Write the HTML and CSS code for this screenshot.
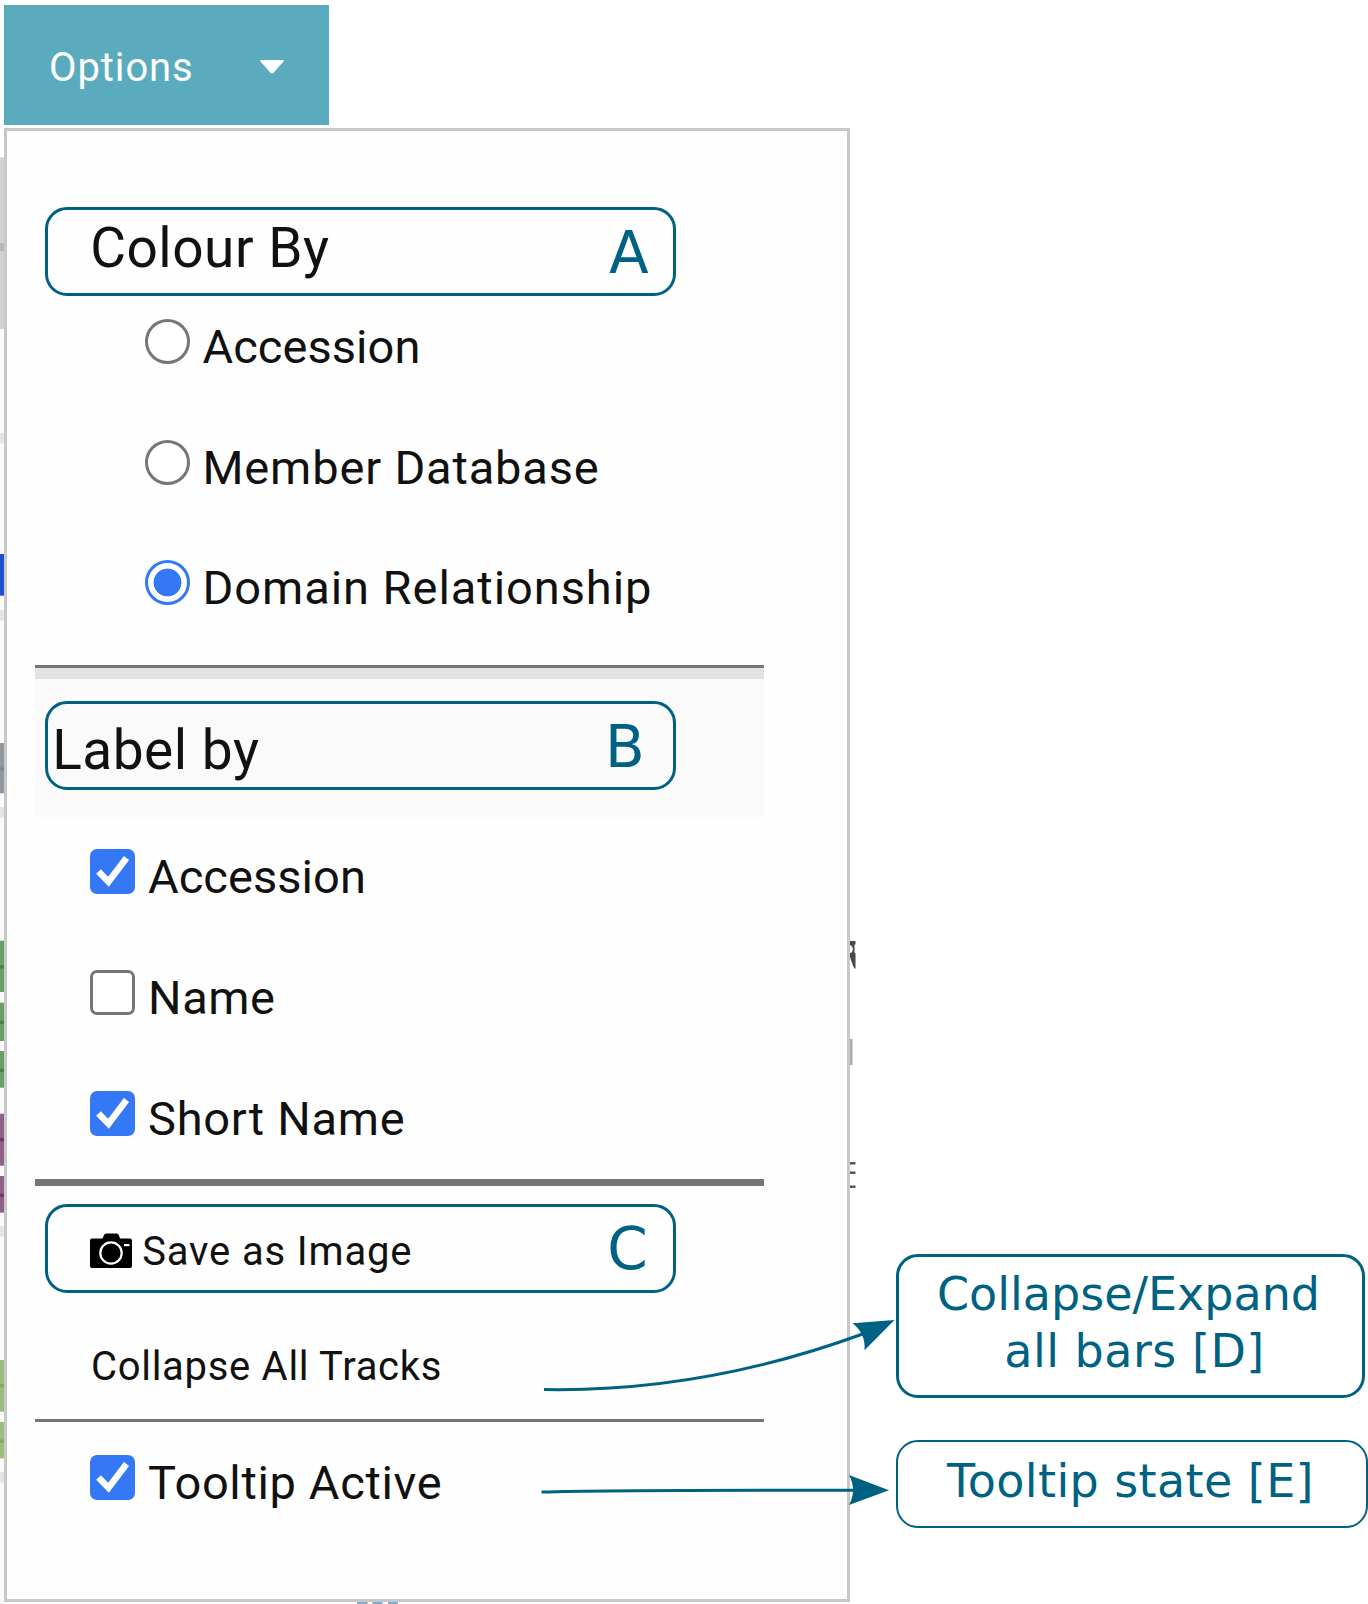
FILE: index.html
```html
<!DOCTYPE html>
<html lang="en">
<head>
<meta charset="utf-8">
<title>Options menu</title>
<link rel="stylesheet" href="styles.css">
</head>
<body>
<main class="page">
  <svg class="tracks" width="1368" height="1604" viewBox="0 0 1368 1604" aria-hidden="true">
    <rect x="0" y="329" width="4" height="1275" fill="#fafafa"/>
    <rect x="0" y="157.5" width="4" height="171.5" fill="#d1d1d1"/><rect x="0" y="243" width="4" height="8" fill="#b7b7b7"/>
    <g fill="#e4e4e4">
      <rect x="0" y="433" width="4" height="10.5"/><rect x="0" y="610" width="4" height="10.5"/>
      <rect x="0" y="807" width="4" height="10.5"/><rect x="0" y="1226" width="4" height="10.5"/>
      <rect x="0" y="1472" width="4" height="10.5"/>
    </g>
    <rect x="0" y="554" width="4" height="41.7" fill="#1f50d2"/>
    <rect x="0" y="743" width="4" height="50.3" fill="#8f999f"/><rect x="0" y="767.5" width="4" height="3" fill="#7d878d"/>
    <g fill="#6a9f67">
      <rect x="0" y="940.7" width="4" height="51.3"/><rect x="0" y="1002.7" width="4" height="38.3"/><rect x="0" y="1051" width="4" height="36.7"/>
    </g>
    <g fill="#4a8246">
      <rect x="0" y="965" width="4" height="3.5"/><rect x="0" y="1020.5" width="4" height="3.5"/><rect x="0" y="1068.5" width="4" height="3.5"/>
    </g>
    <g fill="#8f6187"><rect x="0" y="1113.7" width="4" height="52"/><rect x="0" y="1176" width="4" height="36.7"/></g>
    <g fill="#713d68"><rect x="0" y="1138" width="4" height="3.5"/><rect x="0" y="1193.5" width="4" height="3.5"/></g>
    <g fill="#9bbd7e"><rect x="0" y="1360" width="4" height="51.7"/><rect x="0" y="1422" width="4" height="36.3"/></g>
    <g fill="#7fae5c"><rect x="0" y="1384" width="4" height="3.5"/><rect x="0" y="1439.5" width="4" height="3.5"/></g>
    <path d="M850 941h5.500v3.500l-1 0v8l1 1v15.500q-2-1-3.500-6l-2-6v-4c3.500 0 4-7 0-8z" fill="#484848"/>
    <rect x="850" y="1039" width="2.5" height="26" fill="#aaa"/>
    <path d="M850 1162h5.500v2.500h-5.500zM850 1171.500h5.500v2.500h-5.500zM850 1185.500h5.500v2.500h-5.500z" fill="#555"/>
    <path d="M357 1602h10.500v2h-10.500zM372.500 1602h10v2h-10zM388 1602h10v2h-10z" fill="#7cacd0"/>
  </svg>

  <div class="menu">
    <button class="toggle" type="button">
      <span>Options</span>
      <svg width="26" height="16" viewBox="0 0 26 16"><path d="M2 1h22q1.500 0 .500 1.500L14.500 13.700q-1.500 1.500-3 0L1.500 2.500Q.500 1 2 1z" fill="#fff"/></svg>
    </button>

    <div class="panel">
      <section class="colour">
        <h2 class="frame frame-a"><span>Colour By</span><b class="key">A</b></h2>
        <div class="radios">
          <label class="option"><i class="radio"></i><span class="t-acc">Accession</span></label>
          <label class="option"><i class="radio"></i><span class="t-member">Member Database</span></label>
          <label class="option"><i class="radio on"></i><span class="t-domain">Domain Relationship</span></label>
        </div>
      </section>

      <section class="label-by">
        <h2 class="frame frame-b"><span>Label by</span><b class="key">B</b></h2>
      </section>
      <div class="checks">
        <label class="option"><i class="check on"><svg viewBox="0 0 45 45"><path d="M8.500 22.500l10 10.200L36.500 9" /></svg></i><span class="t-acc">Accession</span></label>
        <label class="option"><i class="check"></i><span class="t-name">Name</span></label>
        <label class="option"><i class="check on"><svg viewBox="0 0 45 45"><path d="M8.500 22.500l10 10.200L36.500 9" /></svg></i><span class="t-short">Short Name</span></label>
      </div>

      <section class="actions">
        <div class="frame frame-c">
          <svg class="camera" width="42" height="35" viewBox="0 0 42 35">
            <path d="M2 5.500h10.500L14 2q.7-1.500 2.200-1.500h10.500q1.500 0 2.100 1.500l1.200 3.500h10q2 0 2 2V33q0 2-2 2H2q-2 0-2-2V7.500q0-2 2-2z" fill="#000"/>
            <circle cx="21" cy="20" r="10.700" fill="none" stroke="#fff" stroke-width="2.200"/>
            <rect x="34" y="11" width="5.500" height="2.200" fill="#fff"/>
          </svg>
          <span class="t-save">Save as Image</span><b class="key">C</b>
        </div>
        <div class="collapse">Collapse All Tracks</div>
      </section>

      <section class="tooltip-row">
        <label class="option"><i class="check on"><svg viewBox="0 0 45 45"><path d="M8.500 22.500l10 10.200L36.500 9" /></svg></i><span class="t-tip">Tooltip Active</span></label>
      </section>
    </div>
  </div>

  <aside class="callouts">
    <div class="callout callout-d"><span>Collapse/Expand</span><span class="second">all bars [D]</span></div>
    <div class="callout callout-e"><span>Tooltip state [E]</span></div>
  </aside>

  <svg class="arrows" width="1368" height="1604" viewBox="0 0 1368 1604" aria-hidden="true">
    <g fill="none" stroke="#006283" stroke-width="3">
      <path d="M544 1389.500C655 1391.500 762 1371 864 1333.500"/>
      <path d="M541.500 1492C600 1490 700 1490 856 1490.200"/>
    </g>
    <g fill="#006283">
      <path d="M894.500 1320L852.500 1323.300Q866 1334 864.500 1350.300z"/>
      <path d="M889 1490.300L849 1475Q857 1490 849 1505z"/>
    </g>
  </svg>
</main>
</body>
</html>
```
FILE: styles.css
```css
* { box-sizing: border-box; }
body { margin: 0; background: #fff; }

.page {
  position: relative;
  display: flex;
  width: 1368px;
  height: 1604px;
  overflow: hidden;
  font-family: Roboto, sans-serif;
  color: #111;
}
.tracks, .arrows { position: absolute; left: 0; top: 0; }
.menu { position: relative; flex: none; width: 850px; padding-top: 5px; }

.toggle {
  display: flex;
  align-items: center;
  justify-content: space-between;
  width: 325.500px;
  height: 120px;
  margin: 0 0 3px 3.500px;
  padding: 0 44px 0 45.500px;
  border: 0;
  background: #5aabbe;
  color: #fff;
  font: 400 40px/50px Roboto, sans-serif;
  letter-spacing: .9px;
}
.toggle span { padding-top: 5px; }
.toggle svg { margin-top: 4px; }

.panel {
  width: 846px;
  height: 1474px;
  margin-left: 4px;
  padding: 76px 83px 0 28px;
  border: 3px solid #c8c8c8;
  background: #fefefe;
}

.frame {
  display: flex;
  justify-content: space-between;
  width: 631px;
  height: 89px;
  margin: 0 0 0 9.700px;
  border: 3px solid #006283;
  border-radius: 22px;
  font-size: 55px;
  font-weight: 400;
  line-height: 70px;
  letter-spacing: .5px;
}
.key {
  color: #006283;
  font: 400 58px/70px "DejaVu Sans", sans-serif;
  letter-spacing: 0;
}
.frame-a { padding: 2.500px 24px 0 42.500px; }
.frame-a .key { padding-top: 5px; }
.frame-b { padding: 11.500px 28px 0 4.500px; }
.frame-b .key { margin-top: -3px; }
.frame-c { padding: 0 25px 0 42.500px; }
.frame-c .key { margin-top: 7px; }

.radios {
  display: grid;
  grid-template-rows: 121.300px 119.700px 105px;
  padding: 22.700px 0 0 110px;
}
.option {
  display: flex;
  align-items: flex-start;
  font-size: 47px;
  line-height: 45px;
}
.option span { margin: 5.500px 0 0 13px; white-space: nowrap; }
.radio, .check { flex: none; width: 45px; height: 45px; border: 3px solid #767676; background: #fff; }
.radio { margin-left: -.5px; border-radius: 50%; }
.radio.on { border-color: #3478f6; background: radial-gradient(circle, #3478f6 13.500px, #fff 14.300px); }
.check { border-radius: 7px; }
.check.on { border: 0; background: #3478f6; }
.check svg { display: block; fill: none; stroke: #fff; stroke-width: 6.5; }

.label-by {
  height: 152.500px;
  padding-top: 33px;
  border-top: 3px solid #767676;
  background: linear-gradient(#e3e3e3 11px, #fafafa 11px);
  margin-top: .3px;
}
.checks {
  display: grid;
  grid-template-rows: 121.300px 121px 88.500px;
  padding: 31.200px 0 0 55px;
}
.actions {
  height: 239.500px;
  padding-top: 17.500px;
  border-top: 7px solid #767676;
}
.camera { flex: none; margin-top: 26.500px; }
.t-save { flex: 1; margin: 10px 0 0 10px; font-size: 40px; line-height: 70px; letter-spacing: .85px; }
.collapse {
  padding: 49.500px 0 0 56px;
  font-size: 40px;
  line-height: 50px;
  letter-spacing: .7px;
}
.tooltip-row { padding: 33px 0 0 55px; border-top: 3px solid #767676; }

.t-acc { letter-spacing: .05px; }
.t-member { letter-spacing: .83px; }
.t-domain { letter-spacing: .95px; }
.t-name { letter-spacing: .6px; }
.t-short { letter-spacing: .75px; }
.t-tip { letter-spacing: .65px; }

.callouts {
  display: flex;
  flex: none;
  flex-direction: column;
  gap: 42px;
  padding: 1253.500px 0 0 46px;
}
.callout {
  display: flex;
  flex-direction: column;
  align-items: center;
  border: 3px solid #006283;
  border-radius: 22px;
  color: #006283;
  font: 400 46px/57px "DejaVu Sans", sans-serif;
  white-space: nowrap;
}
.callout-d { width: 469px; height: 144.500px; padding: 9.500px 4px 0 0; }
.callout-d .second { padding-left: 12px; letter-spacing: .5px; }
.callout-e { width: 472px; height: 87.500px; padding: 11px 3px 0 0; border-width: 2px; letter-spacing: .4px; }
```
